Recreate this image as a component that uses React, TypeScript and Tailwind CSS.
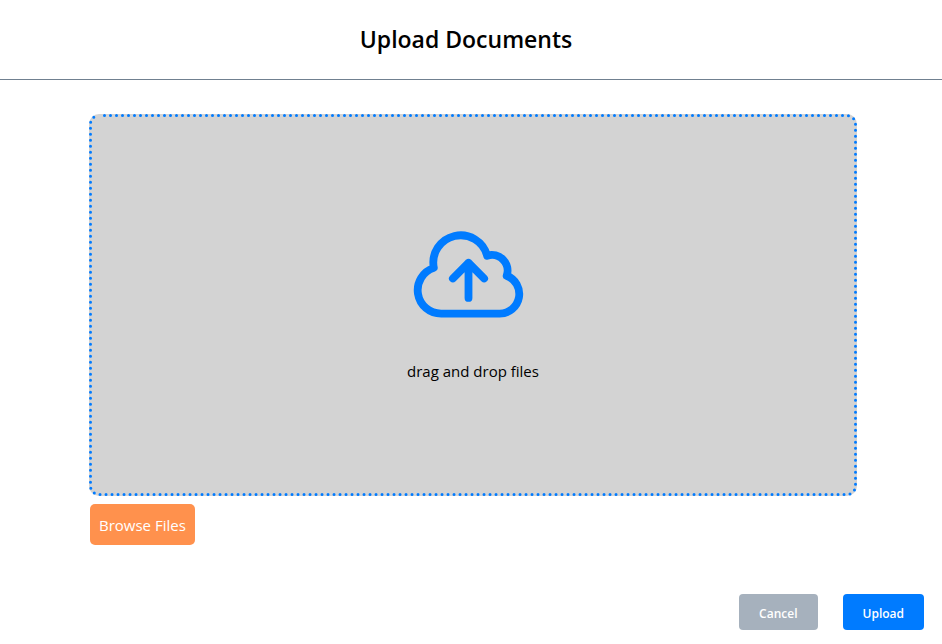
import { useRef } from "react";

function CloudUploadIcon() {
  return (
    <svg
      className="size-[125px]"
      viewBox="0 0 24 24"
      fill="none"
      stroke="currentColor"
      strokeWidth={1.5}
      strokeLinecap="round"
      strokeLinejoin="round"
      aria-hidden="true"
    >
      <path d="M12 16.5V9.75m0 0l3 3m-3-3l-3 3M6.75 19.5a4.5 4.5 0 01-1.41-8.775 5.25 5.25 0 0110.233-2.33 3 3 0 013.758 3.848A3.752 3.752 0 0118 19.5H6.75z" />
    </svg>
  );
}

// Round dots along the edge; CSS dotted borders this thin come out square.
function DottedOutline() {
  return (
    <svg className="pointer-events-none absolute inset-0 size-full" aria-hidden="true">
      <rect
        className="h-[calc(100%-3px)] w-[calc(100%-3px)]"
        x={1.5}
        y={1.5}
        rx={8.5}
        fill="none"
        stroke="#007bff"
        strokeWidth={3}
        strokeLinecap="round"
        strokeDasharray="0 6"
        strokeDashoffset={0.5}
      />
    </svg>
  );
}

export default function App() {
  const fileInput = useRef<HTMLInputElement>(null);

  return (
    <div className="min-h-screen bg-white font-['Open_Sans','Noto_Sans',sans-serif] text-black">
      <header className="flex h-20 items-center justify-center border-b border-[#708090] pr-[10px] pb-px">
        <h1 className="text-[23px] leading-8 font-semibold">Upload Documents</h1>
      </header>

      <main className="pt-[34px] pr-[85px] pl-[89px]">
        <div className="relative flex h-[382px] flex-col items-center rounded-[10px] bg-[#d3d3d3] pt-[98px]">
          <DottedOutline />
          <div className="pr-[10px] text-[#007bff]">
            <CloudUploadIcon />
          </div>
          <p className="mt-[22px] text-[15px] leading-6">drag and drop files</p>
        </div>
        <input ref={fileInput} type="file" multiple hidden aria-label="Browse Files" />
        <button
          type="button"
          onClick={() => fileInput.current?.click()}
          className="mt-2 ml-px block h-[41px] rounded-[5px] bg-[#ff914d] px-[9px] text-[15px] leading-6 text-white"
        >
          Browse Files
        </button>
      </main>

      <footer className="mt-[49px] flex justify-end gap-[25px] pr-[18px]">
        <button type="button" className="h-9 rounded bg-[#a6b1bd] px-5 pt-[3px] text-[12px] font-semibold text-white">
          Cancel
        </button>
        <button type="button" className="h-9 rounded bg-[#007bff] px-5 pt-[3px] text-[12px] font-semibold text-white">
          Upload
        </button>
      </footer>
    </div>
  );
}
